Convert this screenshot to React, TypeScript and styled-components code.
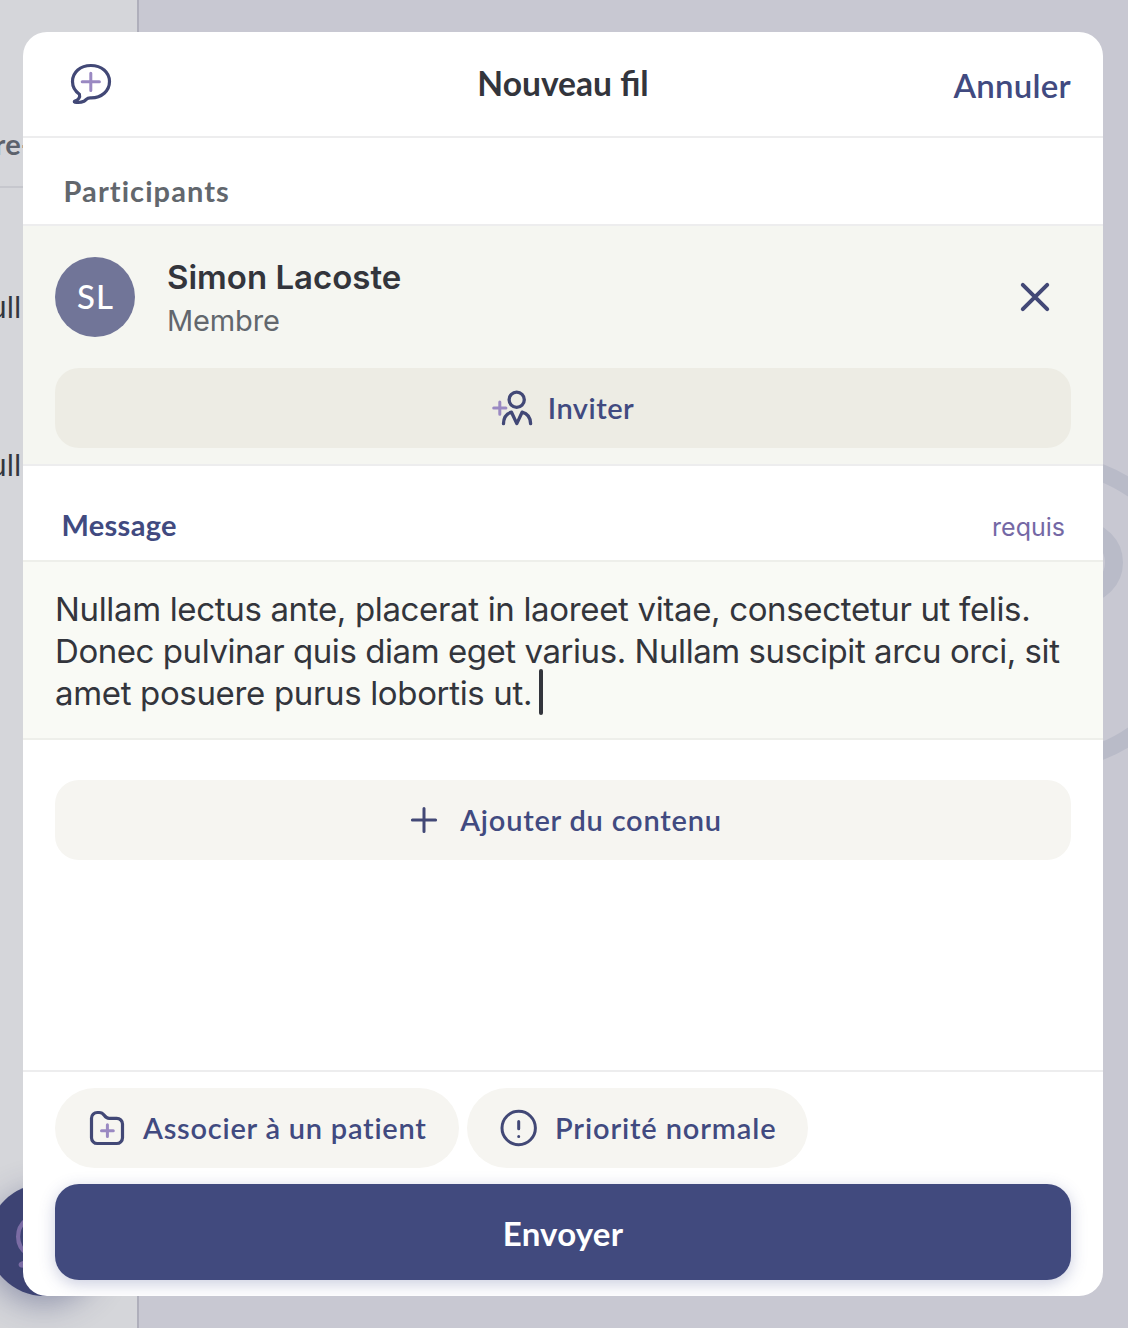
import React from 'react';
import styled, { createGlobalStyle } from 'styled-components';

const c = {
  ink: '#33353c',
  grey: '#62676d',
  indigo: '#414a80',
  icon: '#424876',
  purple: '#9a89c2',
  line: '#ededee',
};
const brandFont = 'Lato, "Open Sans", sans-serif';
const textFont = 'Inter, "Noto Sans", sans-serif';

const GlobalStyle = createGlobalStyle`
  *, *::before, *::after { box-sizing: border-box; }
  body { margin: 0; background: #c8c8d2; }
  button { border: 0; margin: 0; padding: 0; background: none; color: inherit; font: inherit; }
  p, h1, h2 { margin: 0; }
  svg { display: block; flex: none; overflow: visible; }
`;

const Screen = styled.div`
  position: relative;
  width: 1128px;
  height: 1328px;
  padding: 32px 25px 32px 23px;
  overflow: hidden;
`;

const Backdrop = styled.div`
  position: absolute;
  inset: 0;
  display: flex;
  background: #c8c8d2;
`;
const Sidebar = styled.aside`
  position: relative;
  width: 139px;
  border-right: 2px solid #afafbb;
  background: #d5d6da;
  overflow: hidden;
`;
const SidebarHead = styled.div`
  height: 188px;
  padding: 127px 0 0;
  margin-bottom: 40px;
  border-bottom: 2px solid #c6c7cd;
  text-indent: -5.5px;
  font: 700 29px/34px ${brandFont};
  letter-spacing: 0.3px;
  color: #5c626c;
`;
const SidebarRow = styled.div`
  display: flex;
  align-items: center;
  height: 158px;
  margin-left: -11px;
  font: 400 30px/34px ${textFont};
  color: #33363f;
`;
const Fab = styled.div`
  position: absolute;
  left: -12px;
  top: 1184px;
  width: 112px;
  height: 112px;
  display: grid;
  place-items: center;
  border-radius: 50%;
  background: #3d4373;
  box-shadow: 0 8px 32px rgba(58, 64, 112, 0.45);
`;
const Watermark = styled.svg`
  position: absolute;
  left: 880px;
  top: 450px;
`;

const Modal = styled.section`
  position: relative;
  display: flex;
  flex-direction: column;
  height: 1264px;
  border-radius: 24px;
  background: #fff;
  overflow: hidden;
`;
const Header = styled.header`
  display: grid;
  grid-template-columns: 1fr auto 1fr;
  align-items: center;
  height: 106px;
  padding: 0 32px 0 48px;
  border-bottom: 2px solid ${c.line};
`;
const Title = styled.h1`
  margin: 0 16px 3px 0;
  font: 700 33.6px/40px ${brandFont};
  color: ${c.ink};
`;
const Cancel = styled.button`
  justify-self: end;
  padding-top: 1px;
  font: 600 33px/40px ${brandFont};
  letter-spacing: 0.25px;
  color: ${c.indigo};
`;

const SectionHead = styled.div<{ $height: number; $accent?: boolean }>`
  display: flex;
  align-items: flex-end;
  justify-content: space-between;
  height: ${p => p.$height}px;
  padding: 0 38px ${p => (p.$accent ? 18 : 16)}px ${p => (p.$accent ? 38.5 : 40.5)}px;
  border-bottom: 2px solid ${p => (p.$accent ? '#eeefea' : c.line)};
  color: ${p => (p.$accent ? c.indigo : c.grey)};
`;
const SectionLabel = styled.h2<{ $ls: number }>`
  font: 700 29px/34px ${brandFont};
  letter-spacing: ${p => p.$ls}px;
`;
const Required = styled.span`
  font: 400 25px/30px ${textFont};
  color: #7468a5;
`;

const Participants = styled.div`
  height: 240px;
  padding: 31px 32px 0;
  border-bottom: 2px solid ${c.line};
  background: #f5f6f1;
`;
const Member = styled.div`
  display: flex;
  align-items: center;
  gap: 32px;
  height: 80px;
  padding-right: 16px;
  margin-bottom: 31px;
`;
const Avatar = styled.div`
  display: grid;
  place-items: center;
  width: 80px;
  height: 80px;
  padding: 0 0 2px 1px;
  border-radius: 50%;
  background: #717598;
  font: 500 33px/40px ${brandFont};
  letter-spacing: 1px;
  color: #fff;
`;
const MemberText = styled.div`
  flex: 1;
  display: flex;
  flex-direction: column;
  gap: 4px;
  padding-top: 4px;
`;
const MemberName = styled.p`
  font: 600 33px/40px ${textFont};
  color: ${c.ink};
`;
const MemberRole = styled.p`
  font: 400 29px/40px ${textFont};
  letter-spacing: -0.15px;
  color: ${c.grey};
`;
const ActionButton = styled.button<{ $bg: string; $ls: number }>`
  display: flex;
  align-items: center;
  justify-content: center;
  gap: 16px;
  width: 100%;
  height: 80px;
  border-radius: 24px;
  background: ${p => p.$bg};
  font: 600 29px/34px ${brandFont};
  letter-spacing: ${p => p.$ls}px;
  color: ${c.indigo};
`;

const Editor = styled.div`
  height: 178px;
  padding: 26px 32px 0;
  border-bottom: 2px solid #eeefea;
  background: #f9faf5;
`;
const Line = styled.div<{ $ls: number }>`
  display: flex;
  align-items: center;
  height: 42px;
  white-space: pre;
  font: 400 33px/42px ${textFont};
  letter-spacing: ${p => p.$ls}px;
  color: ${c.ink};
`;
const Caret = styled.span`
  width: 4px;
  height: 46px;
  margin: -5px 0 -3px 7px;
  border-radius: 2px;
  background: ${c.ink};
`;
const Content = styled.div`
  flex: 1;
  padding: 40px 32px 0;
`;

const Footer = styled.footer`
  height: 226px;
  padding: 16px 32px;
  border-top: 2px solid ${c.line};
`;
const Chips = styled.div`
  display: flex;
  gap: 8px;
  margin-bottom: 16px;
`;
const Chip = styled.button<{ $width: number; $ls: number }>`
  display: flex;
  align-items: center;
  gap: 16px;
  width: ${p => p.$width}px;
  height: 80px;
  padding-left: 32px;
  border-radius: 40px;
  background: #f6f5f1;
  font: 600 29px/34px ${brandFont};
  letter-spacing: ${p => p.$ls}px;
  white-space: nowrap;
  color: ${c.indigo};
`;
const Send = styled.button`
  width: 100%;
  height: 96px;
  padding-top: 1px;
  border-radius: 24px;
  background: #414a7e;
  box-shadow: 0 4px 16px rgba(65, 74, 140, 0.28);
  font: 700 33px/40px ${brandFont};
  letter-spacing: 0.2px;
  color: #fff;
`;

const Icon = ({ size = 40, children }: { size?: number; children: React.ReactNode }) => (
  <svg width={size} height={size} viewBox="0 0 40 40" fill="none" stroke={c.icon} strokeWidth="3" strokeLinecap="round" strokeLinejoin="round">
    {children}
  </svg>
);

const bubble =
  'M8.4 30.2C4 27.2 1.5 22.8 1.5 17.6 1.5 8.2 9.4 1.5 19.9 1.5S38.5 8.2 38.5 17.6 30.6 33.9 20.2 33.9C15.2 33.4 16.2 35.6 13 37.2 10.3 38.5 6.5 38.7 3.9 38.2 3 37.9 3.2 37.3 4 37 7.4 36 9.4 33.2 8.4 30.2Z';

export default function App() {
  return (
    <Screen>
      <GlobalStyle />
      <Backdrop>
        <Sidebar>
          <SidebarHead>re-</SidebarHead>
          <SidebarRow>ull</SidebarRow>
          <SidebarRow>ull</SidebarRow>
          <Fab>
            <Icon size={56}>
              <path d={bubble} stroke="#7b6ca4" />
            </Icon>
          </Fab>
        </Sidebar>
        <Watermark width="248" height="330" viewBox="880 450 248 330" fill="none" stroke="#b9bbc8">
          <circle cx="1047" cy="612" r="149.5" strokeWidth="17" />
          <circle cx="1082" cy="562.5" r="32" strokeWidth="18" />
        </Watermark>
      </Backdrop>

      <Modal>
        <Header>
          <Icon>
            <path d={bubble} strokeWidth="3.2" />
            <path d="M19.8 9.2v17.2M11.2 17.8h17.2" stroke={c.purple} />
          </Icon>
          <Title>Nouveau fil</Title>
          <Cancel>Annuler</Cancel>
        </Header>

        <SectionHead $height={88}>
          <SectionLabel $ls={1.08}>Participants</SectionLabel>
        </SectionHead>
        <Participants>
          <Member>
            <Avatar>SL</Avatar>
            <MemberText>
              <MemberName>Simon Lacoste</MemberName>
              <MemberRole>Membre</MemberRole>
            </MemberText>
            <Icon>
              <path d="M7.8 7.8l24.4 24.4M32.2 7.8L7.8 32.2" strokeWidth="4" />
            </Icon>
          </Member>
          <ActionButton $bg="#edece4" $ls={0.5}>
            <Icon>
              <circle cx="24.7" cy="11.7" r="7.6" strokeWidth="3.3" />
              <path d="M11.5 35.6C11.7 29.6 14.4 25.6 19.5 24.2L24.8 35.6 30.1 24.2C35.2 25.6 38.4 29.6 38.6 35.6" strokeWidth="3.3" />
              <path d="M7.8 13.9v12.4M1.7 20.1h12.2" stroke={c.purple} />
            </Icon>
            Inviter
          </ActionButton>
        </Participants>

        <SectionHead $height={96} $accent>
          <SectionLabel $ls={0.3}>Message</SectionLabel>
          <Required>requis</Required>
        </SectionHead>
        <Editor>
          <Line $ls={-0.34}>Nullam lectus ante, placerat in laoreet vitae, consectetur ut felis.</Line>
          <Line $ls={-0.44}>Donec pulvinar quis diam eget varius. Nullam suscipit arcu orci, sit</Line>
          <Line $ls={-0.34}>
            amet posuere purus lobortis ut.
            <Caret />
          </Line>
        </Editor>

        <Content>
          <ActionButton $bg="#f6f5f1" $ls={0.77}>
            <Icon>
              <path d="M20 8.4v23.2M8.4 20h23.2" />
            </Icon>
            Ajouter du contenu
          </ActionButton>
        </Content>

        <Footer>
          <Chips>
            <Chip $width={404} $ls={0.76}>
              <Icon>
                <path d="M4.5 10.3a5.8 5.8 0 0 1 5.8-5.8h1.9c2.4 0 3.7.9 5 2.7 1.4 1.9 2.6 3.1 4.9 3.1h7.6a5.8 5.8 0 0 1 5.8 5.8v13.6a5.8 5.8 0 0 1-5.8 5.8H10.3a5.8 5.8 0 0 1-5.8-5.8Z" strokeWidth="3.2" />
                <path d="M20.4 16.8v11.8M14.5 22.7h11.8" stroke={c.purple} />
              </Icon>
              Associer à un patient
            </Chip>
            <Chip $width={341} $ls={0.87}>
              <Icon>
                <circle cx="19.7" cy="20" r="16.7" />
                <path d="M19.7 13.6v7.2M19.7 28.4v.2" />
              </Icon>
              Priorité normale
            </Chip>
          </Chips>
          <Send>Envoyer</Send>
        </Footer>
      </Modal>
    </Screen>
  );
}
